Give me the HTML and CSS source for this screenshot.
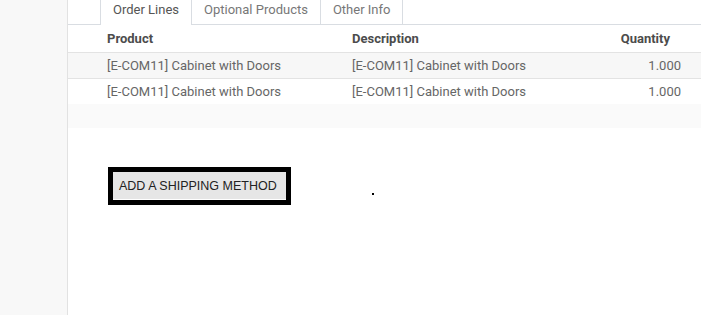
FILE: index.html
```html
<!DOCTYPE html>
<html lang="en">
<head>
    <meta charset="UTF-8">
    <title>Sale Order</title>
    <link rel="stylesheet" href="styles.css">
</head>
<body>

<div class="layout">
    <div class="side"></div>

    <div class="sheet">
        <!-- Notebook tabs -->
        <ul class="tabs">
            <li class="tab active">Order Lines</li>
            <li class="tab">Optional Products</li>
            <li class="tab">Other Info</li>
        </ul>

        <!-- Order lines -->
        <table class="lines">
            <thead>
                <tr>
                    <th class="col-product">Product</th>
                    <th class="col-desc">Description</th>
                    <th class="col-qty">Quantity</th>
                </tr>
            </thead>
            <tbody>
                <tr class="odd">
                    <td class="col-product">[E-COM11] Cabinet with Doors</td>
                    <td class="col-desc">[E-COM11] Cabinet with Doors</td>
                    <td class="col-qty">1.000</td>
                </tr>
                <tr class="last">
                    <td class="col-product">[E-COM11] Cabinet with Doors</td>
                    <td class="col-desc">[E-COM11] Cabinet with Doors</td>
                    <td class="col-qty">1.000</td>
                </tr>
            </tbody>
            <tfoot>
                <tr><td colspan="3"></td></tr>
            </tfoot>
        </table>

        <div class="actions">
            <button type="button" class="ship-btn">ADD A SHIPPING METHOD</button>
            <span class="dot"></span>
        </div>
    </div>
</div>

</body>
</html>
```

FILE: styles.css
```css
body {
    margin: 0;
    font-family: 'Roboto', 'Liberation Sans', sans-serif;
    font-size: 13px;
    color: #666;
    background-color: #fff;
}

.layout {
    display: flex;
    height: 315px;
}

.side {
    width: 67px;
    background-color: #f8f8f8;
    border-right: 1px solid #e2e2e2;
}

.sheet {
    flex: 1;
    background-color: #fff;
}

/* Tabs */
.tabs {
    display: flex;
    list-style: none;
    margin: 0;
    padding: 0 0 0 32px;
    height: 24px;
    border-bottom: 1px solid #d9dde2;
}

.tab {
    padding: 0 12px;
    line-height: 20px;
    height: 24px;
    border-right: 1px solid #d9dde2;
    color: #777;
}

.tab.active {
    border-left: 1px solid #d9dde2;
    height: 25px;
    background-color: #fff;
    color: #555;
}

/* Lines table */
.lines {
    width: 100%;
    border-collapse: collapse;
}

.lines th {
    height: 27px;
    font-weight: bold;
    color: #4c4c4c;
    text-align: left;
    border-bottom: 1px solid #e3e3e3;
    padding: 0;
}

.lines td {
    height: 25px;
    padding: 0;
    border-bottom: 1px solid #e3e3e3;
}

.lines tr.odd td {
    background-color: #f7f7f7;
}

.lines tr.last td {
    border-bottom: none;
}

.col-product {
    width: 245px;
    padding-left: 39px !important;
}

.lines th.col-qty {
    text-align: right;
    padding-right: 31px;
}

.lines td.col-qty {
    text-align: right;
    padding-right: 20px;
}

.lines tfoot td {
    height: 24px;
    background-color: #fafafa;
    border-bottom: none;
}

/* Shipping button */
.actions {
    display: flex;
    align-items: flex-end;
    padding: 39px 0 0 40px;
}

.ship-btn {
    font-family: 'Liberation Sans', Arial, sans-serif;
    font-size: 12.5px;
    color: #222;
    background-color: #e6e6e6;
    border: 5px solid #000;
    width: 183px;
    height: 38px;
    padding: 0 0 0 6px;
    text-align: left;
    box-shadow: inset 0 -1px 0 #fff;
}

.dot {
    width: 2px;
    height: 2px;
    background-color: #000;
    margin: 0 0 10px 81px;
}
```
